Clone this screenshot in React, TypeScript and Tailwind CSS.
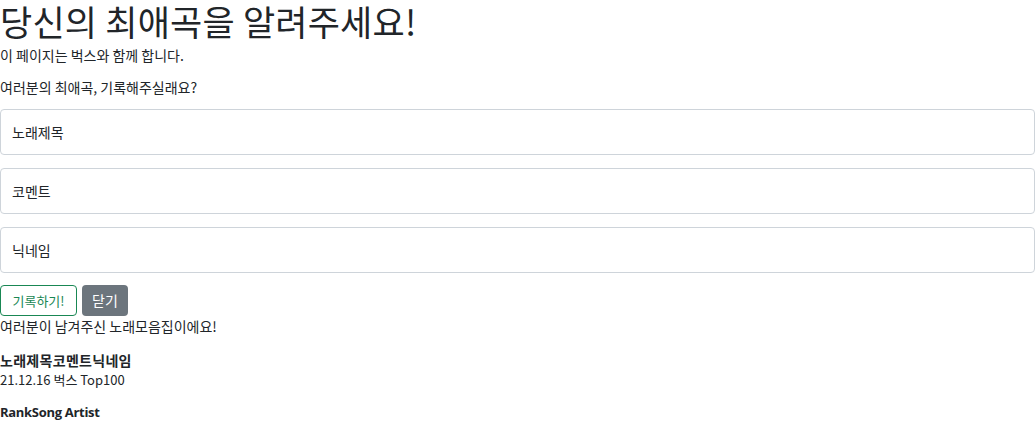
export default function App() {
  return (
    <div className="bg-white text-[#212529] font-['Noto_Sans_CJK_KR',sans-serif] text-[14px] w-[1036px] h-[426px] overflow-hidden">
      <h1 className="text-[35px] leading-[42px] tracking-[0.2px]">당신의 최애곡을 알려주세요!</h1>
      <p className="leading-[20px] mt-[3px]">이 페이지는 벅스와 함께 합니다.</p>
      <p className="leading-[20px] mt-[12px]">여러분의 최애곡, 기록해주실래요?</p>

      <div className="mt-[12px] flex flex-col gap-[13px] pr-[1px]">
        {["노래제목", "코멘트", "닉네임"].map((label) => (
          <div
            key={label}
            className="h-[46px] border border-[#ced4da] rounded-[4px] flex items-center px-[11px] text-[14px]"
          >
            {label}
          </div>
        ))}
      </div>

      <div className="mt-[12px] flex gap-[5px]">
        <button className="h-[31px] w-[77px] border border-[#198754] text-[#198754] rounded-[4px] text-[13px]">
          기록하기!
        </button>
        <button className="h-[31px] w-[46px] bg-[#6c757d] text-white rounded-[4px] text-[14px]">
          닫기
        </button>
      </div>

      <p className="leading-[20px]">여러분이 남겨주신 노래모음집이에요!</p>

      <div className="mt-[14px] font-bold leading-[20px] tracking-[0.3px]">노래제목코멘트닉네임</div>
      <div className="leading-[20px] text-[13px]">21.12.16 벅스 Top100</div>
      <div className="mt-[12px] font-bold leading-[20px] text-[13px] font-['Open_Sans',sans-serif] tracking-[-0.3px]">
        RankSong Artist
      </div>
    </div>
  );
}
